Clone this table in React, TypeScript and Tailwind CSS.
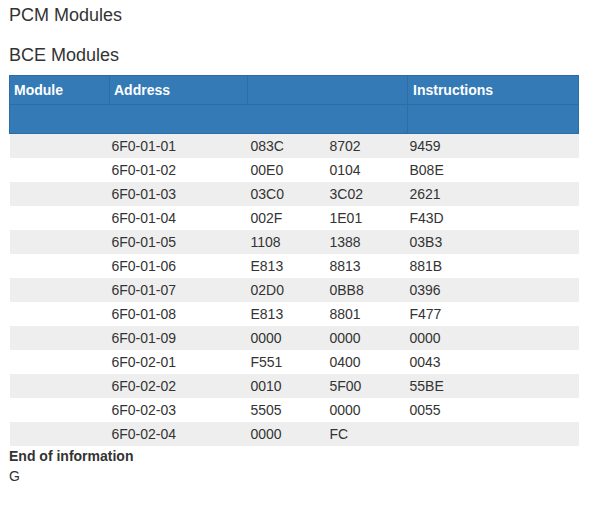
const rows: [string, string, string, string][] = [
  ["6F0-01-01", "083C", "8702", "9459"],
  ["6F0-01-02", "00E0", "0104", "B08E"],
  ["6F0-01-03", "03C0", "3C02", "2621"],
  ["6F0-01-04", "002F", "1E01", "F43D"],
  ["6F0-01-05", "1108", "1388", "03B3"],
  ["6F0-01-06", "E813", "8813", "881B"],
  ["6F0-01-07", "02D0", "0BB8", "0396"],
  ["6F0-01-08", "E813", "8801", "F477"],
  ["6F0-01-09", "0000", "0000", "0000"],
  ["6F0-02-01", "F551", "0400", "0043"],
  ["6F0-02-02", "0010", "5F00", "55BE"],
  ["6F0-02-03", "5505", "0000", "0055"],
  ["6F0-02-04", "0000", "FC", ""],
];

export default function App() {
  return (
    <div className="min-h-[505px] bg-white px-[9px] pt-[5px] text-[14px] leading-5 text-[#333] [font-family:'Liberation_Sans',Arial,sans-serif]">
      <h4 className="text-[18px] leading-[20px]">PCM Modules</h4>
      <h4 className="mt-5 text-[18px] leading-[20px]">BCE Modules</h4>

      <table className="mt-[10px] w-[569px] table-fixed border-collapse">
        <colgroup>
          <col className="w-[100px]" />
          <col className="w-[138px]" />
          <col className="w-[79px]" />
          <col className="w-[81px]" />
          <col className="w-[171px]" />
        </colgroup>
        <thead className="bg-[#337ab7] text-white">
          <tr className="h-[29px]">
            <th className="border border-[#2e6da4] px-[4px] text-left font-bold">Module</th>
            <th className="border border-[#2e6da4] px-[4px] text-left font-bold">Address</th>
            <th colSpan={2} className="border border-[#2e6da4]"></th>
            <th className="border border-[#2e6da4] px-[5px] text-left font-bold">Instructions</th>
          </tr>
          <tr className="h-[29px]">
            <th colSpan={4} className="border border-[#2e6da4]"></th>
            <th className="border border-[#2e6da4]"></th>
          </tr>
        </thead>
        <tbody>
          {rows.map((r, i) => (
            <tr key={r[0]} className={`h-6 ${i % 2 === 0 ? "bg-[#eeeeee]" : "bg-white"}`}>
              <td></td>
              <td className="px-[2px]">{r[0]}</td>
              <td className="px-[3px]">{r[1]}</td>
              <td className="px-[3px]">{r[2]}</td>
              <td className="px-[2px]">{r[3]}</td>
            </tr>
          ))}
        </tbody>
      </table>

      <p className="font-bold">End of information</p>
      <p>G</p>
    </div>
  );
}
